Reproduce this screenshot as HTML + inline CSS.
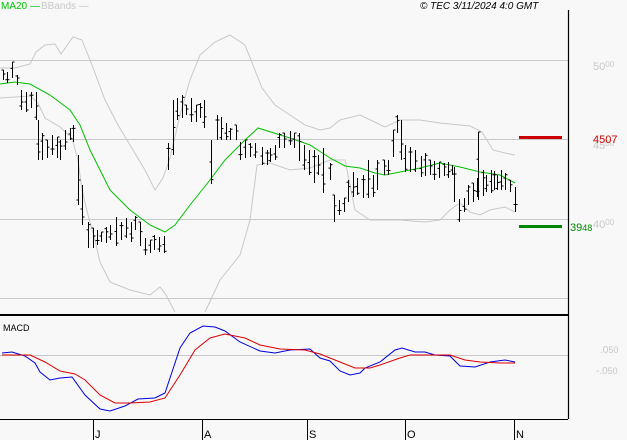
<!DOCTYPE html>
<html><head><meta charset="utf-8"><style>
html,body{margin:0;padding:0;background:#f8f8f8;}
svg{display:block;font-family:"Liberation Sans",sans-serif;}
</style></head><body>
<svg id="s" width="627" height="440" viewBox="0 0 627 440" xmlns="http://www.w3.org/2000/svg">
<rect width="627" height="440" fill="#f8f8f8"/>
<g stroke="#c8c8c8" stroke-width="1">
<line x1="0" y1="60.5" x2="568" y2="60.5"/>
<line x1="0" y1="139.5" x2="568" y2="139.5"/>
<line x1="0" y1="219.5" x2="568" y2="219.5"/>
<line x1="0" y1="298.5" x2="568" y2="298.5"/>
<line x1="0" y1="355.5" x2="568" y2="355.5"/>
</g>
<g fill="none" stroke="#c8c8c8" stroke-width="1">
<polyline points="0,68 15,68 30,64 36,52 45,45 55,44 61,54 73,37 82,40 92,65 105,100 118,125 130,145 145,170 155,190 163,178 170,158 180,115 190,80 200,55 215,42 230,35 245,45 262,88 275,105 290,115 305,125 320,130 330,128 340,120 360,115 385,127 400,120 420,120 440,123 470,126 482,132 493,150 505,153 515,155"/>
<polyline points="0,98 15,97 30,96 38,103 45,118 60,127 72,138 78,160 82,190 88,215 95,240 100,262 110,282 130,290 150,295 160,287 166,295 175,312"/>
<polyline points="205,312 220,280 240,255 250,220 257,165 270,163 290,170 310,168 330,160 345,160 355,210 370,220 400,220 425,222 440,220 450,210 460,203 470,212 480,215 490,210 505,207 515,212"/>
</g>
<polyline fill="none" stroke="#00c000" stroke-width="1" points="0,84 15,82 30,84 50,95 70,110 80,125 90,150 110,190 130,210 150,225 165,232 175,225 190,205 210,180 225,160 245,140 258,128 290,138 310,145 330,158 345,166 360,168 375,173 385,175 400,172 420,168 440,163 460,167 480,172 500,175 515,183"/>
<g id="bars" stroke="#000" stroke-width="1"></g>
<line x1="519" y1="137.5" x2="562" y2="137.5" stroke="#cc0000" stroke-width="3"/>
<line x1="519" y1="226.5" x2="562" y2="226.5" stroke="#008800" stroke-width="3"/>
<line x1="568.5" y1="10" x2="568.5" y2="419" stroke="#000" stroke-width="1.2"/>
<line x1="0" y1="315" x2="568" y2="315" stroke="#000" stroke-width="2"/>
<line x1="0" y1="419.5" x2="568" y2="419.5" stroke="#000" stroke-width="1"/>
<g stroke="#000" stroke-width="1">
<line x1="93.5" y1="419" x2="93.5" y2="440"/><line x1="202.5" y1="419" x2="202.5" y2="440"/>
<line x1="307.5" y1="419" x2="307.5" y2="440"/><line x1="405.5" y1="419" x2="405.5" y2="440"/>
<line x1="514.5" y1="419" x2="514.5" y2="440"/>
</g>
<g font-size="11" fill="#000">
<text x="95" y="438">J</text><text x="204" y="438">A</text><text x="309" y="438">S</text><text x="407" y="438">O</text><text x="516" y="438">N</text>
</g>
<polyline fill="none" stroke="#0000dd" stroke-width="1" points="2,353 12,352 25,356 35,363 40,372 50,380 60,378 72,377 85,395 100,409 110,411 125,406 138,399 155,398 165,393 172,372 180,348 190,333 203,326 215,327 225,331 240,342 260,351 275,353 290,350 310,349 320,358 330,361 340,371 350,375 360,373 365,368 380,362 395,350 402,348 415,352 425,352 435,355 450,356 460,366 475,367 490,362 505,360 515,362"/>
<polyline fill="none" stroke="#dd0000" stroke-width="1" points="2,355 30,355 45,362 60,371 75,374 85,380 100,395 115,403 130,403 150,402 165,398 180,375 195,350 210,338 225,334 245,338 260,345 280,349 305,350 320,354 340,362 355,368 370,368 380,365 400,358 410,355 430,355 450,355 465,360 480,362 500,363 515,363"/>
<text x="3" y="331" font-size="9" fill="#000">MACD</text>
<text x="1" y="9" font-size="10" fill="#00c000">MA20 —</text>
<text x="41" y="9" font-size="10" fill="#c8c8c8">BBands —</text>
<text x="420" y="9" font-size="10" font-style="italic" fill="#000">© TEC 3/11/2024 4:0 GMT</text>
<g fill="#c8c8c8" font-size="11">
<text x="593" y="70">50<tspan font-size="8" dy="-3">00</tspan></text>
<text x="593" y="149">45<tspan font-size="8" dy="-3">00</tspan></text>
<text x="593" y="228">40<tspan font-size="8" dy="-3">00</tspan></text>
<text x="600" y="353" font-size="10">.0<tspan font-size="9">50</tspan></text>
<text x="596" y="374" font-size="10">-.0<tspan font-size="9">50</tspan></text>
</g>
<text x="593" y="143" font-size="11" fill="#cc0000">4507</text>
<text x="570" y="231" font-size="11" fill="#008800">39<tspan font-size="9">48</tspan></text>
</svg>
<script>
var d=[[3,70,80],[7,72,83],[12,62,78],[17,75,85],[21,90,110],[26,92,112],[31,92,108],[36,92,120],[38,120,160],[42,133,160],[47,140,158],[52,135,155],[57,137,158],[60,140,160],[65,130,150],[70,128,140],[73,125,142],[78,155,205],[82,185,225],[88,222,248],[93,228,248],[97,230,245],[101,232,242],[106,227,243],[110,225,240],[116,217,246],[121,222,240],[126,218,238],[131,222,242],[135,216,230],[140,222,246],[145,238,255],[150,240,253],[154,235,250],[159,237,252],[164,236,253],[168,143,170],[173,100,155],[177,98,120],[182,95,118],[186,105,115],[191,98,122],[196,105,122],[200,103,118],[204,100,128],[211,140,184],[217,115,140],[221,117,140],[226,123,140],[230,128,140],[236,125,140],[240,142,160],[245,140,158],[250,143,157],[255,143,158],[262,147,165],[267,150,165],[270,148,162],[275,145,160],[279,133,148],[284,133,148],[290,131,145],[294,133,148],[299,133,161],[304,145,170],[309,150,175],[314,150,183],[318,155,175],[323,148,193],[330,163,180],[334,195,222],[339,200,215],[344,198,212],[348,180,202],[353,172,197],[357,178,195],[363,175,198],[368,160,198],[373,175,197],[377,160,190],[384,160,175],[388,160,175],[393,130,157],[397,115,133],[401,120,160],[405,145,172],[410,147,172],[415,150,172],[421,156,177],[425,153,176],[430,160,175],[434,161,180],[439,162,178],[444,163,176],[448,162,178],[452,165,175],[454,167,202],[459,199,222],[464,198,212],[468,185,205],[473,183,202],[477,178,197],[478,132,200],[483,170,196],[486,175,192],[491,170,193],[494,171,190],[497,175,190],[501,170,190],[505,173,190],[510,180,192],[515,187,212]];
var g=document.getElementById('bars'),h='';
d.forEach(function(b,i){var x=b[0]+.5,o=b[1]+(b[2]-b[1])*((i*7)%10)/10,c=b[1]+(b[2]-b[1])*((i*3+4)%10)/10;
h+='<line x1="'+x+'" y1="'+b[1]+'" x2="'+x+'" y2="'+b[2]+'"/><line x1="'+(x-2)+'" y1="'+o+'" x2="'+x+'" y2="'+o+'"/><line x1="'+x+'" y1="'+c+'" x2="'+(x+2)+'" y2="'+c+'"/>';});
g.innerHTML=h;
</script>
</body></html>
